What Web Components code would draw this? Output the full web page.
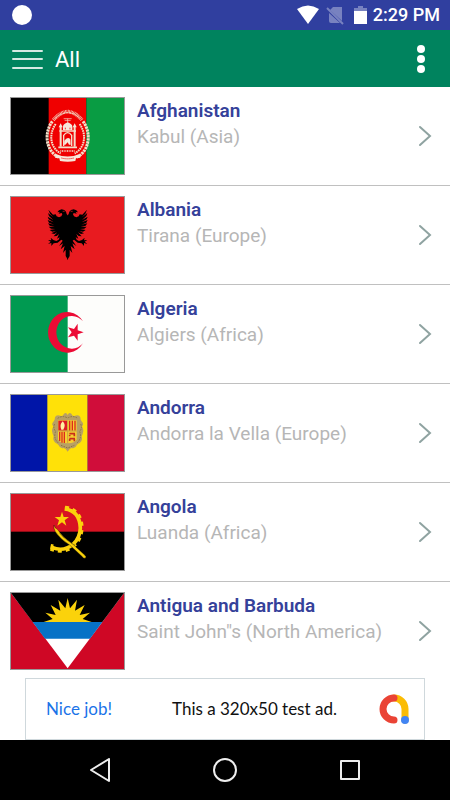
<!DOCTYPE html>
<html lang="en">
<head>
<meta charset="utf-8">
<meta name="viewport" content="width=device-width, initial-scale=1">
<title>Countries</title>
<style>
  :root {
    --font: Roboto, "Liberation Sans", sans-serif;
    --status: #303f9f;
    --brand: #00835e;
    --name: #35419a;
    --muted: #b6b6b6;
    --line: #c0c0c0;
  }
  body {
    margin: 0;
    background: #fff;
    font-family: var(--font);
  }
</style>
</head>
<body>
<country-app></country-app>

<script>
const FLAGS = {
  af: `
    <rect width="339" height="228" fill="#000"/>
    <rect x="113" width="113" height="228" fill="#f00000"/>
    <rect x="226" width="113" height="228" fill="#099c43"/>
    <g fill="none" stroke="#f3dfc9">
      <path d="M124 70C98 104 104 160 144 178M216 70C242 104 236 160 196 178" stroke-width="9" stroke-dasharray="7 2"/>
      <path d="M134 78C112 110 118 150 149 166M206 78C228 110 222 150 191 166" stroke-width="6" stroke-dasharray="5 2"/>
      <path d="M127 66Q170 16 213 66" stroke-width="11" stroke-dasharray="2 2"/>
      <path d="M133 61Q170 27 207 61" stroke-width="3" stroke-dasharray="7 2"/>
      <path d="M158 62h24M161 67h18M170 62v12" stroke-width="2"/>
      <path d="M149 84v62M191 84v62" stroke-width="6"/>
      <path d="M142 148h56M145 99h50" stroke-width="5"/>
      <path d="M158 144v-32q12-16 24 0v32" stroke-width="4"/>
      <path d="M148 159h44" stroke-width="4" stroke-dasharray="3 2"/>
    </g>
    <g fill="#f6e8da">
      <path d="M156 96V86q0-8 14-13 14 5 14 13v10zM143 88l6-12 6 12zM185 88l6-12 6 12z"/>
      <path d="M160 128q10-14 18-4l1 16h-5l-4-7-7 7h-4z"/>
      <path d="M134 168q36 15 72 0l2 11-13 2-2 8q-23 5-46 0l-2-8-13-2z"/>
    </g>
    <path d="M151 180q19 5 38 0M163 89v7M177 89v7" fill="none" stroke="#e33" stroke-width="3" stroke-dasharray="4 2"/>`,
  al: `
    <rect width="339" height="228" fill="#e81b20"/>
    <defs>
      <path id="wing" d="M-1 56L3 51 5 44 10 39 18 37 26 40 31 46 24 45 27 50 18 48 16 52 19 58 26 61 33 58 36 52 44 53 58 38 53 50 43 61 59 48 56 57 43 69 60 59 57 67 42 76 60 69 56 77 41 83 59 79 54 86 39 90 57 89 50 95 37 96 54 99 46 104 35 102 49 109 40 111 31 106 42 118 33 117 26 111 32 125 24 121 27 128 34 132 43 129 51 122 49 130 59 129 51 134 59 141 49 138 49 147 42 139 30 137 19 128 15 131 26 147 14 139 21 157 9 147 14 168 6 158 6 177 -1 189Z"/>
    </defs>
    <use href="#wing" transform="translate(170 0)"/>
    <use href="#wing" transform="matrix(-1 0 0 1 170 0)"/>
    <path d="M155 43h6M179 43h6" stroke="#e81b20" stroke-width="2"/>`,
  dz: `
    <rect width="339" height="228" fill="#fdfdfb"/>
    <rect width="170" height="228" fill="#009a51"/>
    <path d="M216 76A57 61 0 1 0 216 142A46 49 0 1 1 216 76Z" fill="#ec0b35"/>
    <path d="M218 109L200 115 200 134 189 119 171 124 182 109 171 94 189 99 200 83 200 103Z" fill="#ec0b35"/>`,
  ad: `
    <rect width="339" height="228" fill="#0015a8"/>
    <rect x="109" width="121" height="228" fill="#ffe108"/>
    <rect x="230" width="109" height="228" fill="#d00d3a"/>
    <path d="M170 60q4-9 11-4 3 8 9 7 14-6 18 4 0 9 5 13 7 7 0 14 4 8 4 14-2 12-5 16 4 12-5 19-8 3-10 8-4 11-15 8-6 0-12 11-6-11-12-11-11 3-15-8-2-5-10-8-9-7-5-19-3-4-5-16 0-6 4-14-7-7 0-14 5-4 5-13 4-10 18-4 6 1 9-7 7-5 11 4z" fill="#b8a064"/>
    <path d="M140 70q14-10 30-1 16-9 30 1M131 87q-6 12 3 22-8 20 8 35M209 87q6 12-3 22 8 20-8 35M150 151l20 8 20-8" fill="none" stroke="#8b7543" stroke-width="3" stroke-dasharray="5 3"/>
    <path d="M141 76h56v57q-4 12-27 12-25 0-29-12z" fill="#f7cf30"/>
    <path d="M142 77h26v30h-26z" fill="#df1b24"/>
    <path d="M155 79q11 10 2 25h-6q-7-14 4-25z" fill="#fff2a2"/>
    <path d="M176 77v30M184 77v30M192 77v30M146 110v28M153 110v33M160 110v34" stroke="#dc2b1d" stroke-width="4"/>
    <path d="M175 116h17M176 120v4M190 116v8M175 131h17M176 132v6M190 131v8" stroke="#c72f1a" stroke-width="5"/>
    <path d="M170 76v69M141 108h56" stroke="#c9a243" stroke-width="3"/>`,
  ao: `
    <rect width="339" height="228" fill="#d81222"/>
    <rect y="113" width="339" height="115" fill="#000"/>
    <g fill="none" stroke="#fbd20b">
      <path d="M161 45Q206 50 208 102 207 132 186 151 157 175 123 160" stroke-width="11"/>
      <path d="M162 39Q212 45 214 102 212 137 188 158 158 181 118 166" stroke-width="8" stroke-dasharray="12 12"/>
      <path d="M121 165l3-14" stroke-width="8"/>
    </g>
    <path d="M129 93q-2 10 4 20 14 22 43 40l38 35q4 7 10 4 3-5-3-9l-37-34q-30-20-45-43-8-3-10-13z" fill="#fbd20b" stroke="#000" stroke-width="1"/>
    <path d="M146 119q18 19 48 36" fill="none" stroke="#6d5a06" stroke-width="3" stroke-dasharray="3 2"/>
    <path d="M153 53L158 69 174 69 161 79 166 95 153 85 139 95 144 79 131 69 148 69Z" fill="#fbd20b"/>`,
  ag: `
    <rect width="339" height="228" fill="#cf0725"/>
    <path d="M0 0H339L170 226Z" fill="#fff"/>
    <path d="M0 0H339L274 87H65Z" fill="#000"/>
    <path d="M65 87H274L237 137H102Z" fill="#0772c6"/>
    <path d="M98 87L125 78 103 59 134 66 119 36 148 53 142 20 163 46 170 15 177 46 198 20 192 53 221 36 206 66 237 59 215 78 242 87Z" fill="#fbd20b"/>`,
};

const COUNTRIES = [
  { code: 'af', name: 'Afghanistan', place: 'Kabul (Asia)' },
  { code: 'al', name: 'Albania', place: 'Tirana (Europe)' },
  { code: 'dz', name: 'Algeria', place: 'Algiers (Africa)' },
  { code: 'ad', name: 'Andorra', place: 'Andorra la Vella (Europe)' },
  { code: 'ao', name: 'Angola', place: 'Luanda (Africa)' },
  { code: 'ag', name: 'Antigua and Barbuda', place: 'Saint John"s (North America)' },
];

class BaseElement extends HTMLElement {
  connectedCallback() {
    if (this.shadowRoot) return;
    this.attachShadow({ mode: 'open' }).innerHTML = this.render();
  }
}

class StatusBar extends BaseElement {
  render() {
    return `
      <style>
        :host {
          display: flex;
          align-items: center;
          flex: none;
          height: 30px;
          padding: 0 10px 0 12px;
          background: var(--status);
          color: #fff;
        }
        .dot { width: 20px; height: 20px; margin-right: auto; border-radius: 50%; background: #fff; }
        svg { display: block; }
        time { margin-left: 6px; font-size: 18px; font-weight: 500; line-height: 32px; }
      </style>
      <span class="dot"></span>
      <svg width="70" height="20" viewBox="0 0 70 20" fill="#fff" aria-hidden="true">
        <path d="M0 4Q11-3 22 4L11 19Z"/>
        <g opacity=".35">
          <path d="M36 2h9v14L33 5zM32 8l11 10H34q-2 0-2-2z"/>
          <path d="M30 3l16 16" stroke="#fff" stroke-width="2"/>
          <path d="M61 1h5v2h4v3H57V3h4z"/>
        </g>
        <path d="M57 6h13v13H57z"/>
      </svg>
      <time>2:29 PM</time>`;
  }
}

class AppBar extends BaseElement {
  render() {
    return `
      <style>
        :host {
          display: flex;
          align-items: center;
          flex: none;
          height: 57px;
          padding: 0 24px 0 12px;
          background: var(--brand);
          color: #fff;
        }
        button { display: block; padding: 0; border: 0; background: none; color: inherit; }
        svg { display: block; }
        h1 { flex: 1; margin: 0 0 0 11px; font-size: 22px; font-weight: 400; line-height: 32px; padding-top: 2px; }
      </style>
      <button aria-label="Open menu">
        <svg width="32" height="24" viewBox="0 0 32 24" stroke="#d5eae3" stroke-width="2" stroke-linecap="round">
          <path d="M1 4h29M1 12h29M1 21h29"/>
        </svg>
      </button>
      <h1><slot></slot></h1>
      <button aria-label="More options">
        <svg width="10" height="32" viewBox="0 0 10 32" fill="#fff">
          <circle cx="5" cy="6" r="4"/><circle cx="5" cy="16" r="4"/><circle cx="5" cy="26" r="4"/>
        </svg>
      </button>`;
  }
}

class CountryFlag extends BaseElement {
  render() {
    return `
      <style>
        :host {
          display: block;
          flex: none;
          box-sizing: border-box;
          width: 115px;
          height: 78px;
          border: 1px solid #999;
        }
        svg { display: block; width: 100%; height: 100%; }
      </style>
      <svg viewBox="0 0 339 228" preserveAspectRatio="none" aria-hidden="true">${FLAGS[this.getAttribute('code')]}</svg>`;
  }
}

class CountryRow extends BaseElement {
  render() {
    return `
      <style>
        :host { display: block; border-bottom: 1px solid var(--line); }
        a {
          display: flex;
          gap: 12px;
          padding: 10px 18px 10px 10px;
          color: inherit;
          text-decoration: none;
        }
        .text { flex: 1; min-width: 0; padding-top: 1px; font-size: 19px; line-height: 26px; white-space: nowrap; }
        .name { display: block; color: var(--name); font-weight: 600; }
        .place { display: block; color: var(--muted); }
        .arrow { flex: none; align-self: center; }
      </style>
      <a href="#${this.getAttribute('code')}">
        <country-flag code="${this.getAttribute('code')}"></country-flag>
        <span class="text">
          <span class="name"><slot name="name"></slot></span>
          <span class="place"><slot name="place"></slot></span>
        </span>
        <svg class="arrow" width="14" height="22" viewBox="0 0 14 22" fill="none" stroke="#8fa3a1" stroke-width="2" stroke-linecap="round" aria-hidden="true">
          <path d="M2 2l10 9L2 20"/>
        </svg>
      </a>`;
  }
}

class CountryList extends BaseElement {
  render() {
    const rows = COUNTRIES.map(({ code, name, place }) => `
      <country-row code="${code}">
        <span slot="name">${name}</span>
        <span slot="place">${place}</span>
      </country-row>`).join('');
    return `
      <style>
        :host { display: block; flex: 1; min-height: 0; overflow: hidden; }
      </style>
      ${rows}`;
  }
}

class AdBanner extends BaseElement {
  render() {
    return `
      <style>
        :host { display: block; flex: none; padding: 0 25px; background: #fff; }
        a {
          display: grid;
          grid-template-columns: 126px 1fr 32px;
          align-items: center;
          box-sizing: border-box;
          height: 62px;
          padding: 0 14px 0 20px;
          border: 1px solid #cfd8dc;
          color: #111;
          font: 17px/24px Lato, "Open Sans", sans-serif;
          text-decoration: none;
          white-space: nowrap;
        }
        .cta { color: #1a73e8; }
        svg { display: block; }
      </style>
      <a href="#ad">
        <span class="cta">Nice job!</span>
        <span>This a 320x50 test ad.</span>
        <svg width="32" height="32" viewBox="0 0 32 32" fill="none" stroke-width="7" stroke-linecap="round" aria-hidden="true">
          <path d="M16 5A11 11 0 0 1 27 16V27" stroke="#fbbc04"/>
          <path d="M16 5A11 11 0 0 0 16 27" stroke="#ea4335"/>
          <circle cx="27" cy="27" r="4" fill="#4285f4"/>
        </svg>
      </a>`;
  }
}

class NavBar extends BaseElement {
  render() {
    return `
      <style>
        :host {
          display: flex;
          align-items: center;
          justify-content: center;
          gap: 101px;
          flex: none;
          height: 60px;
          background: #000;
        }
        button { display: block; padding: 0; border: 0; background: none; }
        svg { display: block; }
      </style>
      <button aria-label="Back"><svg width="24" height="24" viewBox="0 0 24 24" fill="none" stroke="#eee" stroke-width="2" stroke-linejoin="round"><path d="M3 12L21 1V23Z"/></svg></button>
      <button aria-label="Home"><svg width="24" height="24" viewBox="0 0 24 24" fill="none" stroke="#eee" stroke-width="2"><circle cx="12" cy="12" r="11"/></svg></button>
      <button aria-label="Recent apps"><svg width="24" height="24" viewBox="0 0 24 24" fill="none" stroke="#eee" stroke-width="2" stroke-linejoin="round"><path d="M3 3h18v18H3z"/></svg></button>`;
  }
}

class CountryApp extends BaseElement {
  render() {
    return `
      <style>
        :host { display: flex; flex-direction: column; height: 100vh; }
      </style>
      <status-bar></status-bar>
      <app-bar>All</app-bar>
      <country-list></country-list>
      <ad-banner></ad-banner>
      <nav-bar></nav-bar>`;
  }
}

customElements.define('status-bar', StatusBar);
customElements.define('app-bar', AppBar);
customElements.define('country-flag', CountryFlag);
customElements.define('country-row', CountryRow);
customElements.define('country-list', CountryList);
customElements.define('ad-banner', AdBanner);
customElements.define('nav-bar', NavBar);
customElements.define('country-app', CountryApp);
</script>
</body>
</html>
